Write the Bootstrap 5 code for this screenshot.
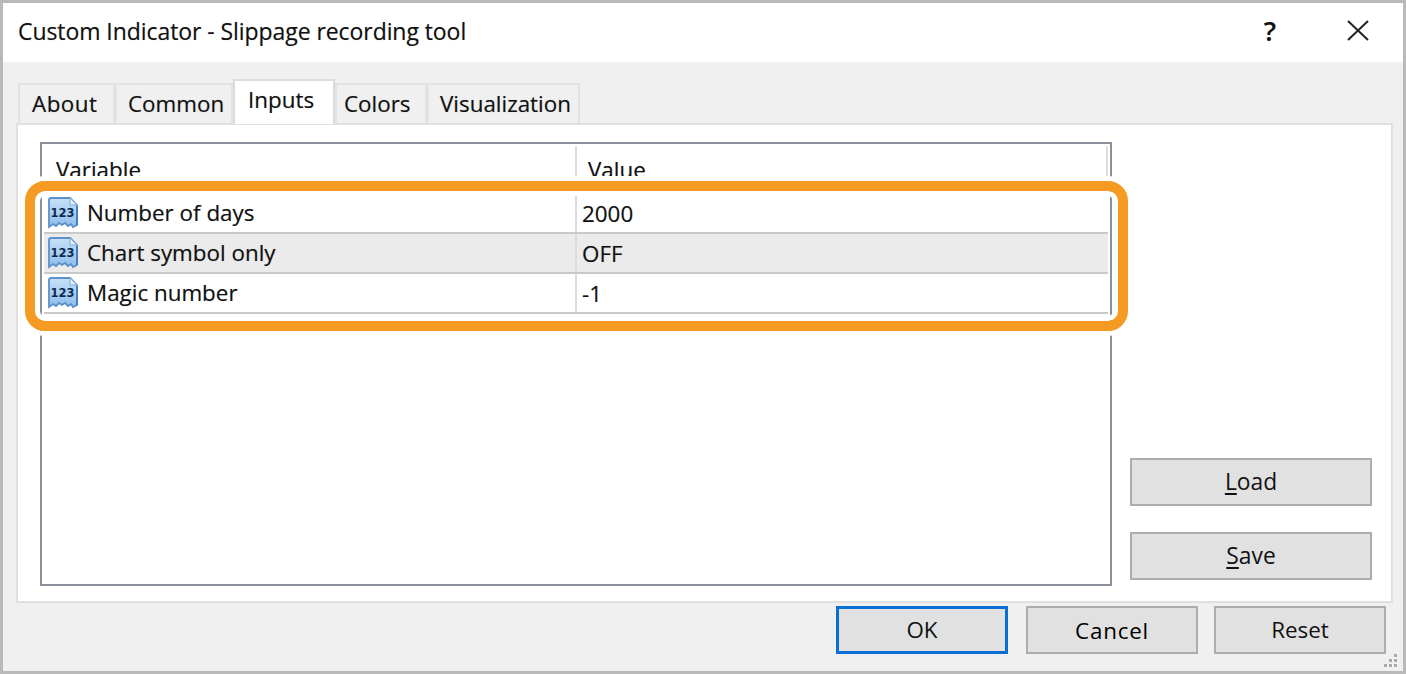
<!DOCTYPE html>
<html lang="en"><head><meta charset="utf-8"><title>Custom Indicator</title>
<link href="https://cdn.jsdelivr.net/npm/bootstrap@5.3.0/dist/css/bootstrap.min.css" rel="stylesheet">
<style>
html,body{height:100%;}
body{margin:0;background:#fff;font-family:"Open Sans","Noto Sans",sans-serif;font-size:22.4px;color:#111;overflow:hidden;text-shadow:0 0 1px rgba(0,0,0,.3);}
.svgdefs{position:absolute;width:0;height:0;}
.win{width:1406px;height:674px;border:3px solid #b9b9b9;}
.titlebar{height:59px;background:#fff;padding:0 34px 2px 15px;}
.titletxt{font-size:23px;line-height:1;letter-spacing:-.07px;}
.helpmark{font-size:27px;font-weight:600;width:24px;text-align:center;margin-right:65px;line-height:1;}
.titlectl{margin-bottom:2px;}
.dlgbody{height:609px;background:#f0f0f0;padding:17px 10px 0 13px;position:relative;}
.tabbar.nav-tabs{border:0;padding-left:2px;height:44px;align-items:flex-end;position:relative;z-index:2;}
.tabbar .nav-link{height:40px;margin:0;padding:0;border:2px solid #e3e3e3;border-bottom:0;border-radius:0;background:#f0f0f0;color:#111;font-size:22.4px;line-height:38px;}
.tabbar .nav-link.active{height:45px;margin:0 0 -1px;background:#fff;color:#111;line-height:38px;border-color:#dcdcdc;}
.tabw1{width:97px;padding-left:12px !important;letter-spacing:.5px;}
.tabw2{width:118px;padding-left:11px !important;}
.tabw3{width:102px;padding-left:13px !important;}
.tabw4{width:92px;padding-left:7px !important;}
.tabw5{width:153px;padding-left:11px !important;}
.panel{height:480px;width:1377px;background:#fff;border:2px solid #e0e0e0;padding:17px 19px 15px 22px;gap:18px;}
.listbox{width:1072px;height:444px;flex:none;border:2px solid #8b8f99;position:relative;background:#fff;}
.lhead{height:36px;line-height:48px;font-size:22.4px;}
.lhead .c1{width:535px;padding-left:14px;border-right:2px solid #dcdcdc;margin:2px 0 0;height:30px;}
.lhead .c2{flex:1;padding-left:11px;height:30px;margin:2px 2px 0 0;border-right:2px solid #dcdcdc;}
.lrows{margin-top:14px;padding:0 2px;}
.lrow{height:40px;border-bottom:2px solid #c9c9c9;padding-top:1px;}
.lrow.alt{background:#ebebeb;}
.lrow .c1{width:533px;gap:7px;padding-left:2px;border-right:2px solid #dcdcdc;height:38px;margin-top:-1px;}
.lrow .c2{padding-left:5px;}
.glyph{width:34px;height:34px;flex:none;}
#numicon text{font-family:"DejaVu Sans",sans-serif;font-weight:700;font-size:11.5px;fill:#0b2a52;text-shadow:none;}
.ring{position:absolute;left:-17px;top:37px;width:1103px;height:150px;border:10px solid #f59b23;border-radius:20px;box-shadow:0 0 0 5px #fff,inset 0 0 0 5px #fff;pointer-events:none;}
.sidecol{width:242px;flex:none;padding-bottom:6px;gap:26px;}
.wbtn.btn{background:#e1e1e1;border:2px solid #adadad;border-radius:0;color:#111;font-size:22.4px;height:48px;padding:0;line-height:1;}
.sidecol .wbtn.btn{width:242px;font-size:22.8px;}
.okrow{gap:18px;margin-top:3px;padding-right:7px;}
.okrow .wbtn.btn{width:172px;}
.okrow .wbtn.btn.primary{border:3px solid #0a6fd4;}
.okrow .wbtn.btn.spaced{letter-spacing:.8px;color:#000;text-shadow:none;padding-top:2px;}
.okrow .wbtn.btn.lastbtn{margin-left:-2px;}
.ul{text-decoration:underline;text-underline-offset:3px;}
.grip{position:absolute;right:5px;bottom:3px;width:14px;height:14px;}
</style></head>
<body>
<svg class="svgdefs" aria-hidden="true"><defs>
  <linearGradient id="nf" x1="0" y1="0" x2="0" y2="1"><stop offset="0" stop-color="#c8e0f7"/><stop offset="1" stop-color="#8fbdec"/></linearGradient>
  <symbol id="numicon" viewBox="0 0 34 34">
    <path d="M5 2H24L31 9V29L27 31 25 28 22 30 19 27 16 29 13 27 10 30 7 28 3 31V4Q3 2 5 2Z" fill="url(#nf)" stroke="#5a90cb" stroke-width="1.8"/>
    <path d="M24 2V9H31Z" fill="#e6f1fb" stroke="#7ea9d8" stroke-width="1"/>
    <path d="M31 10V29" stroke="#3f78b8" stroke-width="1.6"/>
    <text x="16.5" y="21" text-anchor="middle">123</text>
  </symbol>
</defs></svg>
<div class="win">
  <div class="titlebar d-flex align-items-center justify-content-between">
    <div class="titletxt">Custom Indicator - Slippage recording tool</div>
    <div class="titlectl d-flex align-items-center">
      <div class="helpmark">?</div>
      <svg width="22" height="21" viewBox="0 0 22 21"><path d="M1 1 21 20M21 1 1 20" stroke="#222" stroke-width="2" fill="none"/></svg>
    </div>
  </div>
  <div class="dlgbody">
    <ul class="nav nav-tabs tabbar">
      <li class="nav-item"><a class="nav-link tabw1" href="#">About</a></li>
      <li class="nav-item"><a class="nav-link tabw2" href="#">Common</a></li>
      <li class="nav-item"><a class="nav-link active tabw3" href="#">Inputs</a></li>
      <li class="nav-item"><a class="nav-link tabw4" href="#">Colors</a></li>
      <li class="nav-item"><a class="nav-link tabw5" href="#">Visualization</a></li>
    </ul>
    <div class="panel d-flex">
      <div class="listbox">
        <div class="lhead d-flex"><div class="c1">Variable</div><div class="c2">Value</div></div>
        <div class="lrows">
          <div class="lrow d-flex align-items-center"><div class="c1 d-flex align-items-center"><svg class="glyph"><use href="#numicon"/></svg><span>Number of days</span></div><div class="c2">2000</div></div>
          <div class="lrow alt d-flex align-items-center"><div class="c1 d-flex align-items-center"><svg class="glyph"><use href="#numicon"/></svg><span>Chart symbol only</span></div><div class="c2">OFF</div></div>
          <div class="lrow d-flex align-items-center"><div class="c1 d-flex align-items-center"><svg class="glyph"><use href="#numicon"/></svg><span>Magic number</span></div><div class="c2">-1</div></div>
        </div>
        <div class="ring"></div>
      </div>
      <div class="sidecol d-flex flex-column justify-content-end">
        <button class="btn wbtn" type="button"><span class="ul">L</span>oad</button>
        <button class="btn wbtn" type="button"><span class="ul">S</span>ave</button>
      </div>
    </div>
    <div class="okrow d-flex justify-content-end">
      <button class="btn wbtn primary" type="button">OK</button>
      <button class="btn wbtn spaced" type="button">Cancel</button>
      <button class="btn wbtn lastbtn" type="button">Reset</button>
    </div>
    <svg class="grip" viewBox="0 0 14 14"><g fill="#aaa"><rect x="10" y="0" width="3" height="3"/><rect x="5" y="5" width="3" height="3"/><rect x="10" y="5" width="3" height="3"/><rect x="0" y="10" width="3" height="3"/><rect x="5" y="10" width="3" height="3"/><rect x="10" y="10" width="3" height="3"/></g></svg>
  </div>
</div>
</body></html>
